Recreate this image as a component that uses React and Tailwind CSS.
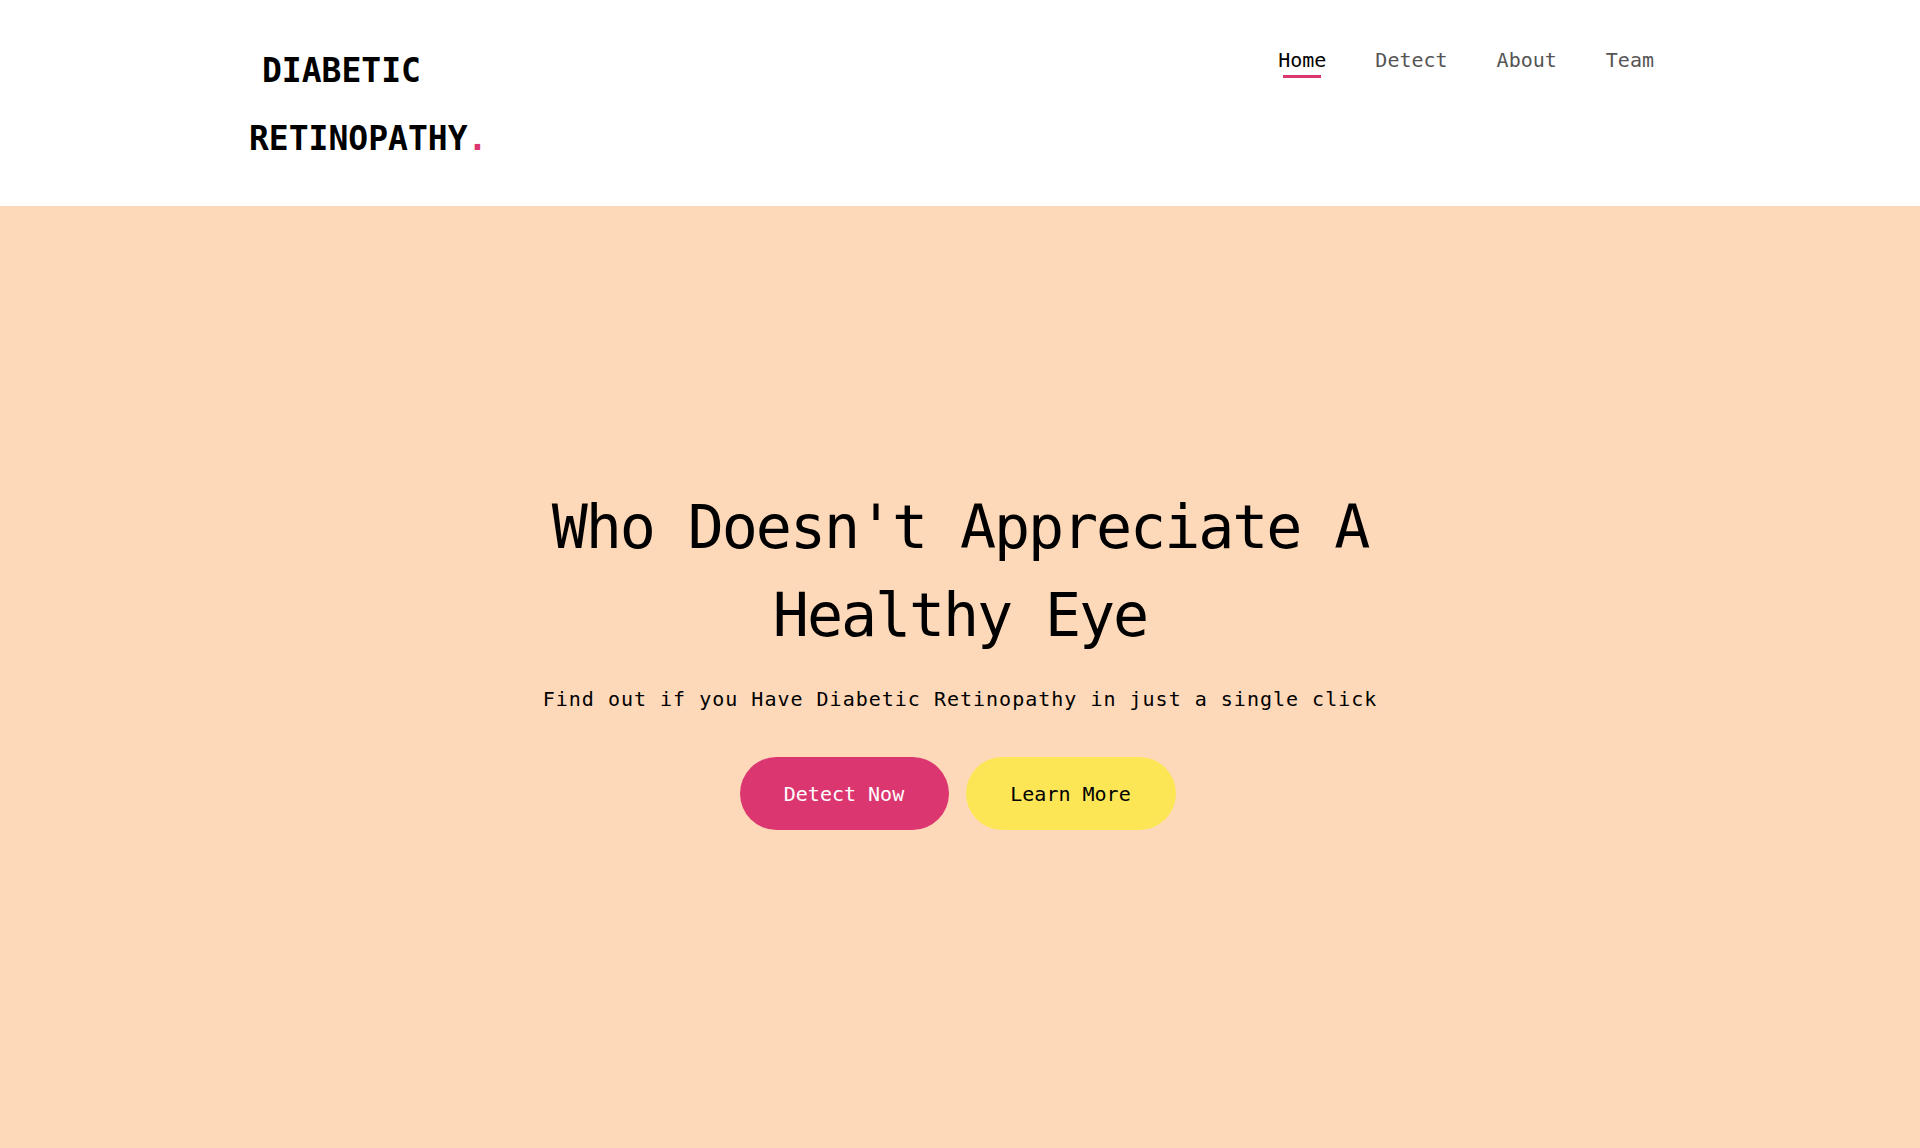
import React from "react";

const navLinks = ["Home", "Detect", "About", "Team"];

const Header = () => {
  return (
    <header className="bg-white h-[206px] flex justify-between items-start pl-[249px] pr-[266px]">
      <div className="pt-[37px] font-bold text-[33px] leading-[68px] text-black">
        <div className="pl-[13px]">DIABETIC</div>
        <div>
          RETINOPATHY<span className="text-[#dc3670]">.</span>
        </div>
      </div>

      <nav className="flex gap-[49px] pt-[49px]">
        {navLinks.map((link, i) => (
          <a key={link} href="#" className="flex flex-col items-center">
            <span
              className={
                i === 0
                  ? "text-[20px] leading-[23px] text-black"
                  : "text-[20px] leading-[23px] text-[#555555]"
              }
            >
              {link}
            </span>
            {i === 0 && <span className="mt-[3px] h-[3px] w-[38px] bg-[#dc3670]" />}
          </a>
        ))}
      </nav>
    </header>
  );
};

const Hero = () => {
  return (
    <section className="bg-[#fdd9b9] h-[942px] pt-[277px] flex flex-col items-center">
      <h1 className="text-[60px] leading-[88px] tracking-[-2.1px] text-black text-center font-normal">
        Who Doesn't Appreciate A
        <br />
        Healthy Eye
      </h1>
      <p className="mt-[26px] text-[20px] leading-[28px] tracking-[1px] text-black">
        Find out if you Have Diabetic Retinopathy in just a single click
      </p>
      <div className="mt-[44px] pr-[5px] flex gap-[17px]">
        <button className="h-[73px] w-[209px] rounded-full bg-[#dc3670] text-white text-[20px]">
          Detect Now
        </button>
        <button className="h-[73px] w-[210px] rounded-full bg-[#fce656] text-black text-[20px]">
          Learn More
        </button>
      </div>
    </section>
  );
};

const App = () => {
  return (
    <div className="min-h-screen font-['DejaVu_Sans_Mono',monospace]">
      <Header />
      <Hero />
    </div>
  );
};

export default App;
